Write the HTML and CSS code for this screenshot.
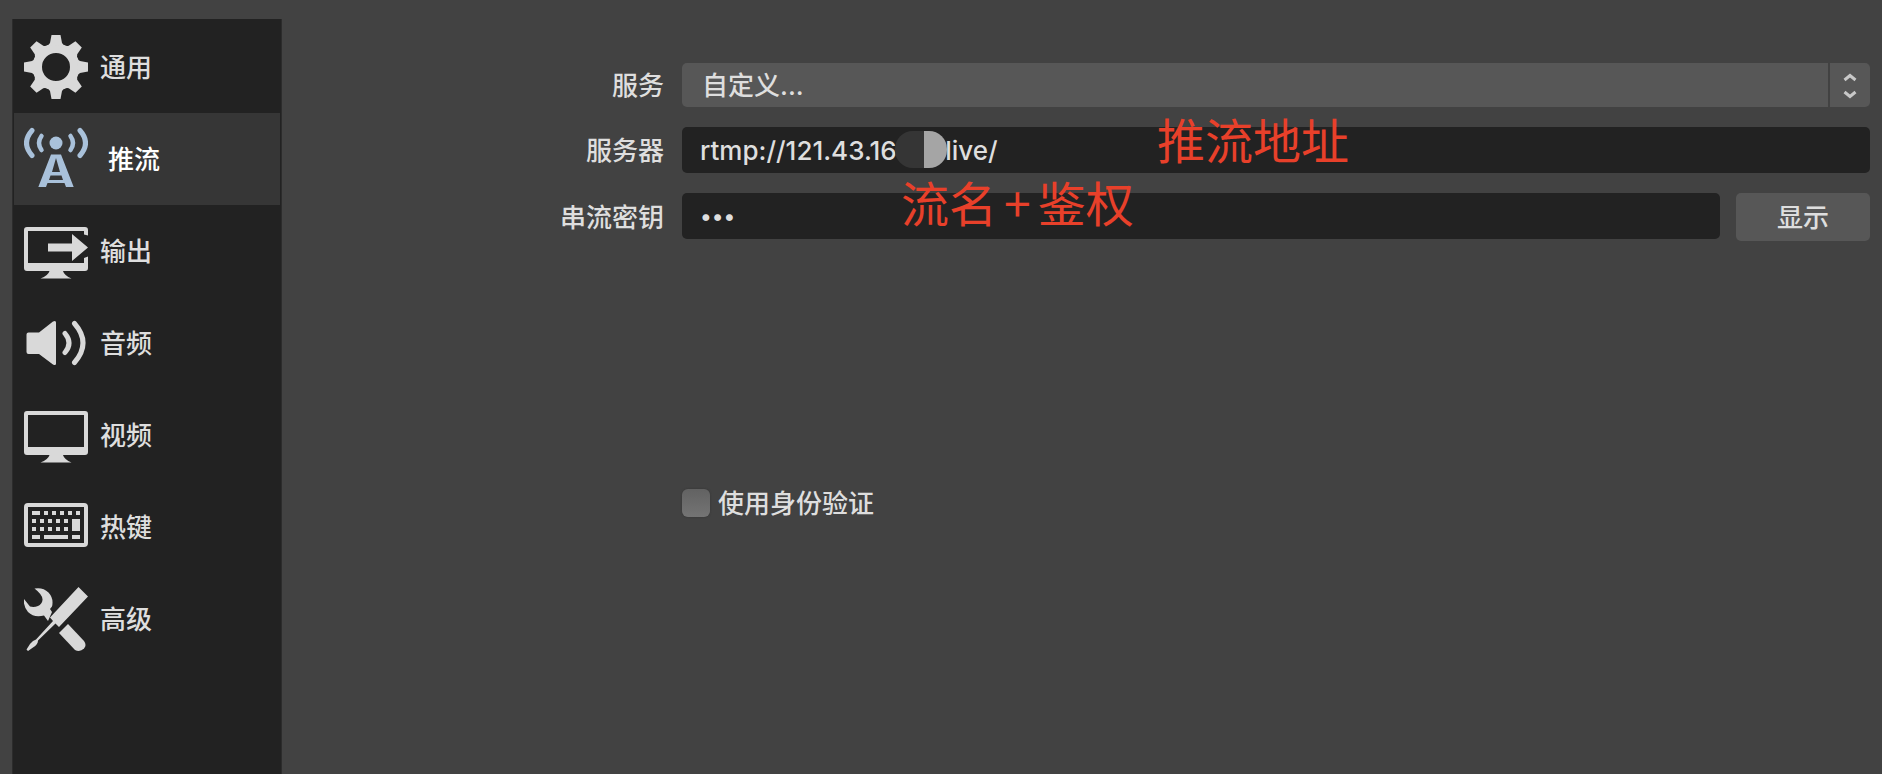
FILE: index.html
```html
<!DOCTYPE html>
<html lang="zh-CN">
<head>
<meta charset="utf-8">
<title>设置</title>
<link rel="stylesheet" href="styles.css">
</head>
<body>
<svg class="defs" aria-hidden="true">
  <defs>
    <path id="tooth" d="M27.5 0h9l1.500 8q1 2 4 3l-4 5H26l-4-5q3-1 4-3z"/>
    <path id="stand" d="M26 51h12.500q2 6 9 8.500H16.500q7.500-2.500 9.500-8.500z"/>
  </defs>
</svg>
<div class="window">
  <nav class="sidebar">
    <button class="item" type="button">
      <svg class="icon" viewBox="0 0 64 64">
        <use href="#tooth"/>
        <use href="#tooth" transform="rotate(45 32 32)"/>
        <use href="#tooth" transform="rotate(90 32 32)"/>
        <use href="#tooth" transform="rotate(135 32 32)"/>
        <use href="#tooth" transform="rotate(180 32 32)"/>
        <use href="#tooth" transform="rotate(225 32 32)"/>
        <use href="#tooth" transform="rotate(270 32 32)"/>
        <use href="#tooth" transform="rotate(315 32 32)"/>
        <circle class="line" cx="32" cy="32" r="18" stroke-width="8"/>
      </svg>
      <span>通用</span>
    </button>
    <button class="item active" type="button" aria-current="page">
      <svg class="icon" viewBox="0 0 64 64">
        <circle cx="32" cy="16" r="6.500"/>
        <path class="line" stroke-width="4.500" d="M17.500 9q-5 7 0 14M46.500 9q5 7 0 14"/>
        <path class="line" stroke-width="5" d="M8 3.500q-11 12.500 0 25M56 3.500q11 12.500 0 25"/>
        <path fill-rule="evenodd" d="M27 27.500h10L49.700 60H42l-1.500-4h-17L22 60h-7.700zM32 31l-4 14h8zM26.500 48.500 25 53h14l-1.500-4.500z"/>
      </svg>
      <span>推流</span>
    </button>
    <button class="item" type="button">
      <svg class="icon" viewBox="0 0 64 64">
        <path d="M3 8h58q3 0 3 3v5.500l-4-1V12H4v32h56v-5l4-1.500V49q0 3-3 3H3q-3 0-3-3V11q0-3 3-3z"/>
        <use href="#stand"/>
        <path d="M24 24.500h24V15l16 13.500L48 42v-9.500H24z"/>
      </svg>
      <span>输出</span>
    </button>
    <button class="item" type="button">
      <svg class="icon" viewBox="0 0 64 64">
        <path d="M4.500 21.500H15L29 10.500q3-1.500 3 1v41q0 2.500-3 1L15 43H4.500q-2 0-2-2V23.500q0-2 2-2z"/>
        <path class="line" stroke-width="5" d="M41 22.500q8 9.500 0 19M50.500 12.500q17 19.500 0 39"/>
      </svg>
      <span>音频</span>
    </button>
    <button class="item" type="button">
      <svg class="icon" viewBox="0 0 64 64">
        <path fill-rule="evenodd" d="M3 8h58q3 0 3 3v38q0 3-3 3H3q-3 0-3-3V11q0-3 3-3zM4 12v32h56V12z"/>
        <use href="#stand"/>
      </svg>
      <span>视频</span>
    </button>
    <button class="item" type="button">
      <svg class="icon" viewBox="0 0 64 64">
        <rect class="line" x="2" y="10" width="60" height="40" rx="2" stroke-width="4"/>
        <path d="M8 16h8v4H8zM20 16h4v4h-4zM28 16h4v4h-4zM36 16h4v4h-4zM44 16h4v4h-4zM52 16h4v4h-4zM8 24h4v4H8zM16 24h4v4h-4zM24 24h4v4h-4zM32 24h4v4h-4zM40 24h4v4h-4zM48 24h8v12h-8zM8 32h4v4H8zM16 32h4v4h-4zM24 32h4v4h-4zM32 32h4v4h-4zM40 32h4v4h-4zM8 40h8v4H8zM20 40h24v4H20zM48 40h8v4h-8z"/>
      </svg>
      <span>热键</span>
    </button>
    <button class="item" type="button">
      <svg class="icon" viewBox="0 0 64 64">
        <path d="M54.500 0 64 9.500 35 40l-3.500-3.500L14 53.500q0 4-5 7L4 64l-1.500-1.500L6 57q3-4 6-4.500L29 34l-3-3.500z"/>
        <path d="M10.500 1.500Q19 0 24.500 5.500q5.500 6 3.500 14l-2 2.500 2 3-4 9-4-5.500Q10 31 4 25-1 19 0 12l6 7.500q4 1 8-.5 4-2 4.500-6 .5-5-8-11.500z"/>
        <path d="M44 37 60 54q3 4 0 7.500-4 4-9 1.500L35 46z"/>
      </svg>
      <span>高级</span>
    </button>
  </nav>
  <main class="form">
    <label class="label" for="service">服务</label>
    <div class="select-wrap">
      <select id="service" class="control select"><option>自定义...</option></select>
      <svg class="chevrons" viewBox="0 0 40 44"><path d="M14.500 17 20 12.500l5.500 4.500M14.500 29l5.500 4.500 5.500-4.500"/></svg>
    </div>
    <label class="label" for="server">服务器</label>
    <div class="field">
      <input id="server" class="control input" type="text" value="rtmp://121.43.16&#160;&#160;&#160;&#160;&#160;&#160;&#160;live/">
      <span class="mask"></span>
      <span class="note note-server">推流地址</span>
    </div>
    <label class="label" for="key">串流密钥</label>
    <div class="key-row">
      <div class="field">
        <input id="key" class="control input key" type="text" value="•••">
        <span class="note note-key">流名<span class="plus">+</span>鉴权</span>
      </div>
      <button class="show" type="button">显示</button>
    </div>
    <label class="auth"><input class="check" type="checkbox"><span>使用身份验证</span></label>
  </main>
</div>
</body>
</html>
```
FILE: styles.css
```css
* { box-sizing: border-box; }

body {
  margin: 0;
  background: #424242;
  color: #dedede;
  font: 500 26px/36px Inter, "Noto Sans CJK SC", sans-serif;
}

button, input, select { font: inherit; color: inherit; }

.defs { position: absolute; width: 0; height: 0; }

.window {
  display: flex;
  min-height: 100vh;
  padding: 19px 12px 0;
}

.sidebar {
  flex: 0 0 270px;
  padding: 2px 1px;
  background: #222;
  border: 1px solid #2c2c2c;
  border-width: 0 1px;
}

.item {
  display: flex;
  align-items: center;
  gap: 12px;
  width: 100%;
  height: 92px;
  padding: 0 10px;
  border: 0;
  background: none;
}

.item span, .label, .auth span { padding-top: 2px; }

.item.active { gap: 20px; background: #363636; color: #fff; }

.icon { width: 64px; height: 64px; fill: #d9d9d9; stroke: #d9d9d9; stroke-width: 0; }
.icon .line { fill: none; stroke-linecap: round; }
.active .icon { fill: #a9c1da; stroke: #a9c1da; }

.form {
  flex: 1;
  display: grid;
  grid-template-columns: 382px 1fr;
  column-gap: 18px;
  row-gap: 20px;
  align-content: start;
  padding-top: 44px;
}

.label { text-align: right; align-self: center; }

.select-wrap, .field { position: relative; }

.control {
  display: block;
  width: 100%;
  border: 0;
  border-radius: 5px;
  outline: 0;
}

.select {
  height: 44px;
  padding: 2px 60px 0 20px;
  appearance: none;
  background: #575757;
}

.chevrons {
  position: absolute;
  top: 0;
  right: 0;
  width: 42px;
  height: 44px;
  border-left: 2px solid #424242;
  fill: none;
  stroke: #c8c8c8;
  stroke-width: 3;
  pointer-events: none;
}

.input { height: 46px; padding: 0 18px; background: #222; }
.input.key { font-size: 22px; }

.mask {
  position: absolute;
  top: 4px;
  left: 213px;
  width: 52px;
  height: 37px;
  border-radius: 18px;
  background: linear-gradient(90deg, #353535 29px, #a5a5a5 29px);
}

.note {
  position: absolute;
  color: #e8402a;
  font: 400 48px/56px "Noto Sans CJK SC", sans-serif;
  white-space: nowrap;
  pointer-events: none;
}

.note-server { top: -17px; left: 475px; }
.note-key { top: -20px; left: 219px; }
.plus { padding: 0 7px; }

.key-row { display: flex; gap: 16px; align-items: flex-start; }
.key-row .field { flex: 1; }

.show {
  width: 134px;
  height: 48px;
  padding: 2px 0 0;
  border: 0;
  border-radius: 5px;
  background: #575757;
}

.auth {
  grid-column: 2;
  display: flex;
  align-items: center;
  justify-self: start;
  gap: 8px;
  margin-top: 223px;
}

.check {
  width: 28px;
  height: 28px;
  margin: 0;
  appearance: none;
  border-radius: 6px;
  background: linear-gradient(#626262, #747474);
  box-shadow: 0 0 2px #333;
}
```
